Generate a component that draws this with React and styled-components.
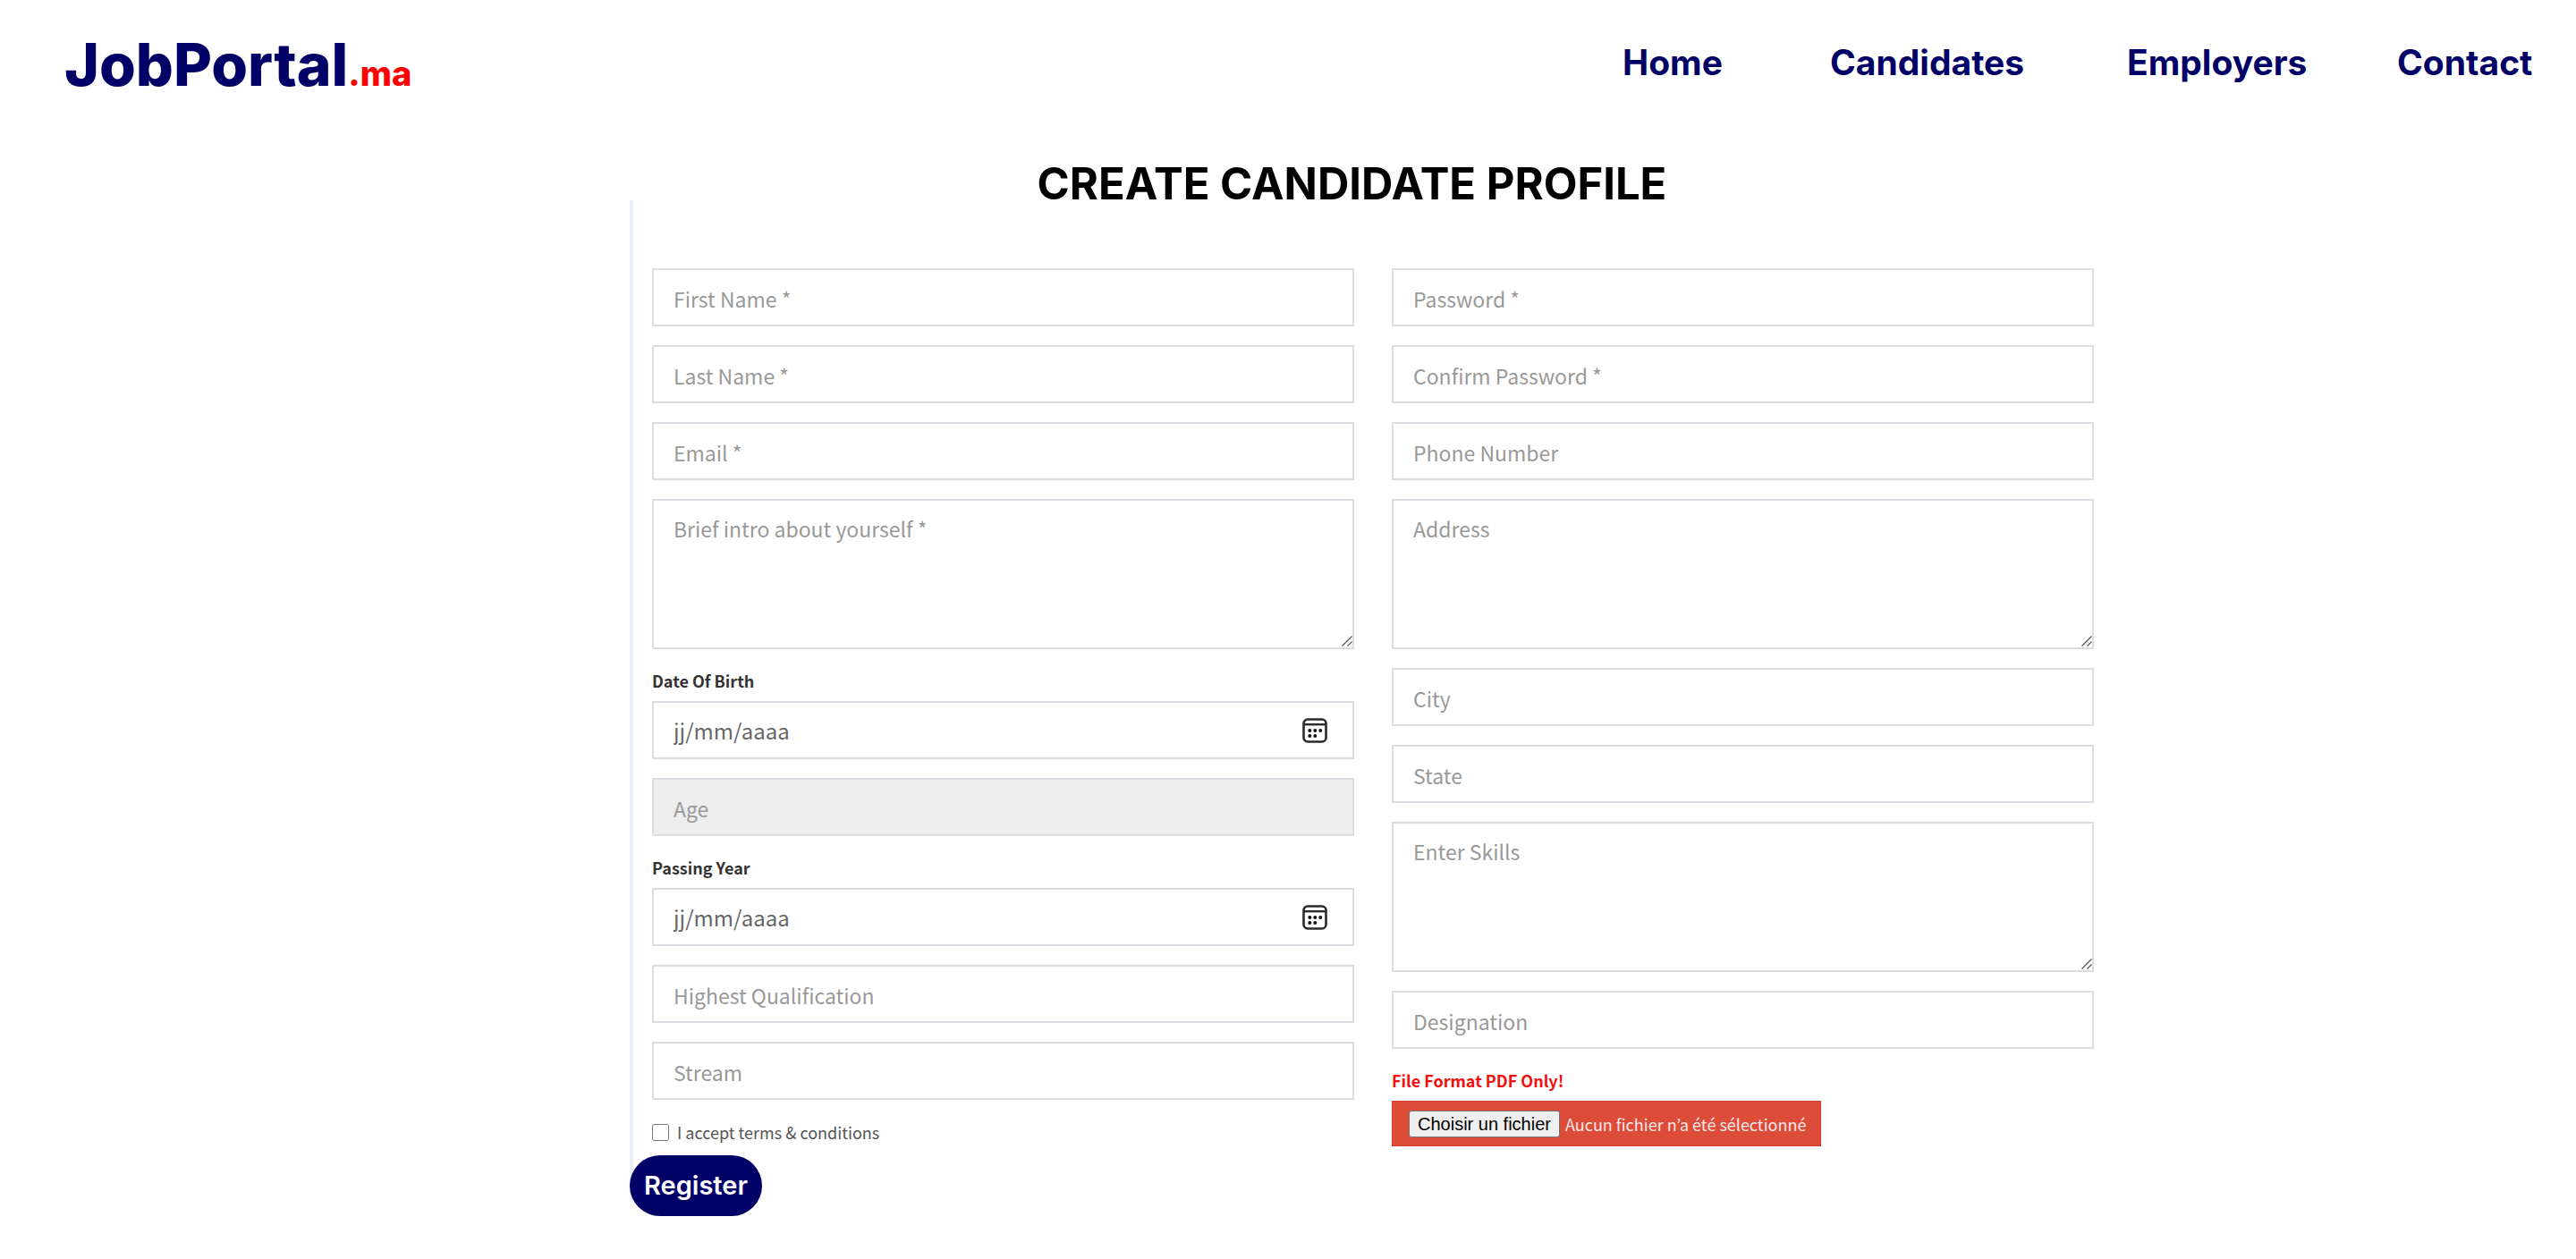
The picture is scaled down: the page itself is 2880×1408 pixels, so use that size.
import React, { useId, useRef } from "react";
import styled, { createGlobalStyle } from "styled-components";

const navy = "#000066";
const line = "#dcdde2";
const display = `Inter, "Liberation Sans", sans-serif`;
const body = `"Noto Sans CJK JP", "Open Sans", sans-serif`;

const GlobalStyle = createGlobalStyle`
  *, *::before, *::after { box-sizing: border-box; }
  body { margin: 0; background: #fff; font-family: ${body}; color: #333; }
`;

const Header = styled.header`
  display: flex;
  justify-content: space-between;
  align-items: flex-start;
  padding: 32px 0 0 72px;
`;

const Logo = styled.a`
  font: 800 66px/80px ${display};
  color: ${navy};
  text-decoration: none;
  white-space: nowrap;
`;

const LogoSuffix = styled.span`
  font-size: 38px;
  line-height: 1;
  color: #ff0000;
`;

const Nav = styled.nav`
  display: grid;
  grid-template-columns: 232px 332px 302px 200px;
  padding-top: 14px;
`;

const NavLink = styled.a`
  font: 700 39px/48px ${display};
  color: ${navy};
  text-decoration: none;
`;

const Main = styled.main`
  padding: 76px 539px 48px 704px;
`;

const Title = styled.h1`
  margin: 0;
  padding-right: 22px;
  font: 700 49px/36px ${display};
  color: #000;
  text-align: center;
  text-transform: uppercase;
  white-space: nowrap;
`;

const Form = styled.form`
  display: flow-root;
  padding: 76px 0 0 21px;
  border-left: 4px solid #eaeff5;
`;

const Columns = styled.div`
  display: grid;
  grid-template-columns: 1fr 1fr;
  column-gap: 42px;
  align-items: start;
`;

const Column = styled.div`
  display: flex;
  flex-direction: column;
  gap: 21px;
`;

const Input = styled.input`
  width: 100%;
  height: 65px;
  padding: 2px 22px 0;
  border: 2px solid ${line};
  border-radius: 0;
  background: #fff;
  font: 400 23px/32px ${body};
  color: #555;
  outline: none;

  &::placeholder { color: #999; opacity: 1; }
  &:disabled { background: #ededed; }
`;

const AreaWrap = styled.div`
  position: relative;
  display: flex;
`;

const Area = styled.textarea`
  width: 100%;
  height: 168px;
  padding: 15px 22px;
  border: 2px solid ${line};
  border-radius: 0;
  background: #fff;
  font: 400 23px/32px ${body};
  color: #555;
  outline: none;
  resize: none;

  &::placeholder { color: #999; opacity: 1; }
`;

const Grip = styled.svg`
  position: absolute;
  right: 2px;
  bottom: 3px;
  width: 12px;
  height: 12px;
  pointer-events: none;
`;

const Group = styled.div`
  display: flex;
  flex-direction: column;
  align-items: ${(p) => (p.$start ? "flex-start" : "stretch")};
  gap: 9px;
`;

const Label = styled.label`
  font: 700 18px/28px ${body};
  color: ${(p) => (p.$alert ? "#f01010" : "#333")};
`;

const DateBox = styled.div`
  display: flex;
  align-items: center;
  height: 65px;
  padding: 0 28px 0 22px;
  border: 2px solid ${line};
  background: #fff;
`;

const DateInput = styled.input`
  flex: 1;
  min-width: 0;
  padding: 0;
  border: 0;
  background: none;
  font: 400 24px/32px ${body};
  color: #555;
  outline: none;

  &::placeholder { color: #666; opacity: 1; }
`;

const IconButton = styled.button`
  display: flex;
  padding: 0;
  border: 0;
  background: none;
  cursor: pointer;
`;

const Terms = styled.label`
  display: flex;
  align-items: center;
  gap: 9px;
  font: 400 18px/30px ${body};
  color: #555;
`;

const Checkbox = styled.input`
  width: 19px;
  height: 19px;
  margin: 0;
`;

const FileBox = styled.div`
  display: flex;
  align-items: center;
  gap: 6px;
  height: 51px;
  padding: 0 16px 0 18px;
  border: 1px solid #d33f2c;
  background: #dd4b39;
  color: #fbe9e7;
  font: 400 18px/28px ${body};
`;

const FileButton = styled.button`
  height: 30px;
  padding: 0 9px;
  border: 1px solid #767676;
  border-radius: 3px;
  background: #efefef;
  font: 400 20px/24px "Liberation Sans", Arial, sans-serif;
  color: #000;
`;

const Submit = styled.button`
  display: block;
  width: 148px;
  height: 68px;
  margin: 10px 0 -16px -25px;
  padding: 0;
  border: 0;
  border-radius: 34px;
  background: ${navy};
  color: #fff;
  font: 600 29px/36px ${display};
  cursor: pointer;
`;

function CalendarIcon() {
  return (
    <svg width="28" height="28" viewBox="0 0 28 28" fill="none" aria-hidden="true">
      <rect x="1.5" y="1.5" width="25" height="25" rx="4.5" stroke="#2b2b2b" strokeWidth="2.6" />
      <path d="M2 7.2h24" stroke="#2b2b2b" strokeWidth="2.4" />
      <g fill="#111">
        <circle cx="8.3" cy="14" r="2" />
        <circle cx="14.3" cy="14" r="2" />
        <circle cx="20.3" cy="14" r="2" />
        <circle cx="8.3" cy="20" r="2" />
        <circle cx="14.3" cy="20" r="2" />
      </g>
    </svg>
  );
}

function Field({ name, type = "text", disabled }) {
  return <Input type={type} placeholder={name} aria-label={name} disabled={disabled} />;
}

function TextArea({ name }) {
  return (
    <AreaWrap>
      <Area placeholder={name} aria-label={name} />
      <Grip viewBox="0 0 12 12" aria-hidden="true">
        <path d="M0.5 11.5L11.5 0.5M6.5 11.5L11.5 6.5" stroke="#555" strokeWidth="1.2" />
      </Grip>
    </AreaWrap>
  );
}

function DateField({ name }) {
  const id = useId();
  return (
    <Group>
      <Label htmlFor={id}>{name}</Label>
      <DateBox>
        <DateInput id={id} type="text" inputMode="numeric" placeholder="jj/mm/aaaa" />
        <IconButton type="button" aria-label={name}>
          <CalendarIcon />
        </IconButton>
      </DateBox>
    </Group>
  );
}

function FileField() {
  const id = useId();
  const picker = useRef(null);
  return (
    <Group $start>
      <Label $alert htmlFor={id}>File Format PDF Only!</Label>
      <FileBox>
        <input ref={picker} id={id} type="file" accept="application/pdf" hidden />
        <FileButton type="button" onClick={() => picker.current.click()}>
          Choisir un fichier
        </FileButton>
        <span>Aucun fichier n’a été sélectionné</span>
      </FileBox>
    </Group>
  );
}

export default function App() {
  return (
    <>
      <GlobalStyle />
      <Header>
        <Logo href="#">JobPortal<LogoSuffix>.ma</LogoSuffix></Logo>
        <Nav>
          <NavLink href="#home">Home</NavLink>
          <NavLink href="#candidates">Candidates</NavLink>
          <NavLink href="#employers">Employers</NavLink>
          <NavLink href="#contact">Contact</NavLink>
        </Nav>
      </Header>
      <Main>
        <Title>Create Candidate Profile</Title>
        <Form onSubmit={(e) => e.preventDefault()}>
          <Columns>
            <Column>
              <Field name="First Name *" />
              <Field name="Last Name *" />
              <Field name="Email *" type="email" />
              <TextArea name="Brief intro about yourself *" />
              <DateField name="Date Of Birth" />
              <Field name="Age" disabled />
              <DateField name="Passing Year" />
              <Field name="Highest Qualification" />
              <Field name="Stream" />
              <Terms>
                <Checkbox type="checkbox" />
                I accept terms &amp; conditions
              </Terms>
            </Column>
            <Column>
              <Field name="Password *" type="password" />
              <Field name="Confirm Password *" type="password" />
              <Field name="Phone Number" type="tel" />
              <TextArea name="Address" />
              <Field name="City" />
              <Field name="State" />
              <TextArea name="Enter Skills" />
              <Field name="Designation" />
              <FileField />
            </Column>
          </Columns>
          <Submit type="submit">Register</Submit>
        </Form>
      </Main>
    </>
  );
}
